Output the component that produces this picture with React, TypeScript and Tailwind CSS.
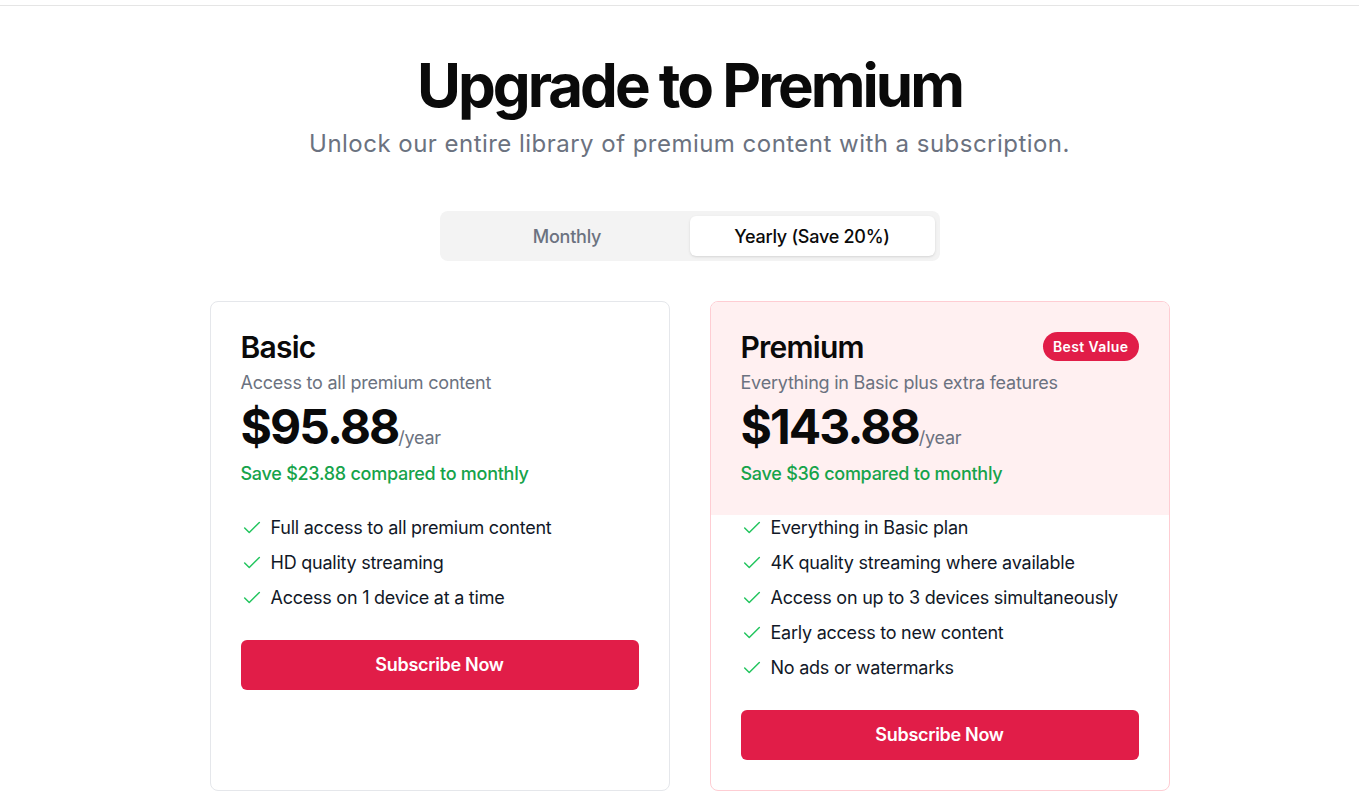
import { Check } from "lucide-react"

const plans = [
  {
    name: "Basic",
    desc: "Access to all premium content",
    price: "$95.88",
    save: "Save $23.88 compared to monthly",
    features: ["Full access to all premium content", "HD quality streaming", "Access on 1 device at a time"],
    featured: false,
  },
  {
    name: "Premium",
    desc: "Everything in Basic plus extra features",
    price: "$143.88",
    save: "Save $36 compared to monthly",
    features: [
      "Everything in Basic plan",
      "4K quality streaming where available",
      "Access on up to 3 devices simultaneously",
      "Early access to new content",
      "No ads or watermarks",
    ],
    featured: true,
  },
]

export default function App() {
  return (
    <div className="min-h-screen bg-white font-['Inter',sans-serif] text-[#0a0a0a]">
      <div className="h-[6px] border-b border-[#e5e5e5]" />

      <main className="pl-5 pt-[49px] flex flex-col items-center">
        <h1 className="text-6xl leading-none font-bold tracking-tighter">Upgrade to Premium</h1>
        <p className="mt-[13px] text-2xl tracking-[0.47px] text-[#6b7280]">
          Unlock our entire library of premium content with a subscription.
        </p>

        <div className="mt-[51px] w-[500px] h-[50px] p-[5px] bg-[#f3f3f3] rounded-lg grid grid-cols-2">
          <button className="pt-[1px] text-lg tracking-[-0.25px] font-medium text-[#6b7280] rounded-md">Monthly</button>
          <button className="pt-[1px] text-lg tracking-[-0.25px] font-medium text-[#0a0a0a] bg-white rounded-md shadow-sm">
            Yearly (Save 20%)
          </button>
        </div>

        <div className="mt-10 w-[960px] grid grid-cols-2 gap-10">
          {plans.map((plan) => (
            <div
              key={plan.name}
              className={
                plan.featured
                  ? "rounded-lg border border-[#fecdd3] overflow-hidden flex flex-col"
                  : "rounded-lg border border-[#e5e7eb] overflow-hidden flex flex-col"
              }
            >
              <div className={plan.featured ? "bg-[#fff0f1] px-[30px] pt-[30px] pb-[27px]" : "px-[30px] pt-[30px] pb-[27px]"}>
                <div className="flex items-start justify-between">
                  <h2 className="text-3xl leading-none font-semibold tracking-tight">{plan.name}</h2>
                  {plan.featured && (
                    <span className="h-[29px] px-[10px] flex items-center rounded-full bg-[#e11d48] text-white text-sm tracking-[0.4px] font-semibold">
                      Best Value
                    </span>
                  )}
                </div>
                <p className="mt-[7px] text-lg tracking-[-0.22px] text-[#6b7280]">{plan.desc}</p>
                <div className="mt-[6px] flex items-baseline">
                  <span className="text-5xl leading-none font-bold tracking-[-0.04em]">{plan.price}</span>
                  <span className="text-lg tracking-[-0.25px] text-[#6b7280]">/year</span>
                </div>
                <p className="mt-[8px] text-lg tracking-[-0.26px] font-medium text-[#16a34a]">{plan.save}</p>
              </div>

              <div className="px-[30px] pb-[30px] flex flex-col">
                <ul className="pt-[1px] flex flex-col gap-[11px]">
                  {plan.features.map((f) => (
                    <li key={f} className="flex items-center gap-2 text-lg leading-6 tracking-[-0.24px] text-[#111827]">
                      <Check className="w-[22px] h-[22px] shrink-0 text-[#22c55e]" strokeWidth={1.6} />
                      {f}
                    </li>
                  ))}
                </ul>
                <button className="mt-[30px] h-[50px] w-full rounded-md bg-[#e11d48] text-white text-lg tracking-[-0.3px] font-semibold">
                  Subscribe Now
                </button>
              </div>
            </div>
          ))}
        </div>
      </main>
    </div>
  )
}
